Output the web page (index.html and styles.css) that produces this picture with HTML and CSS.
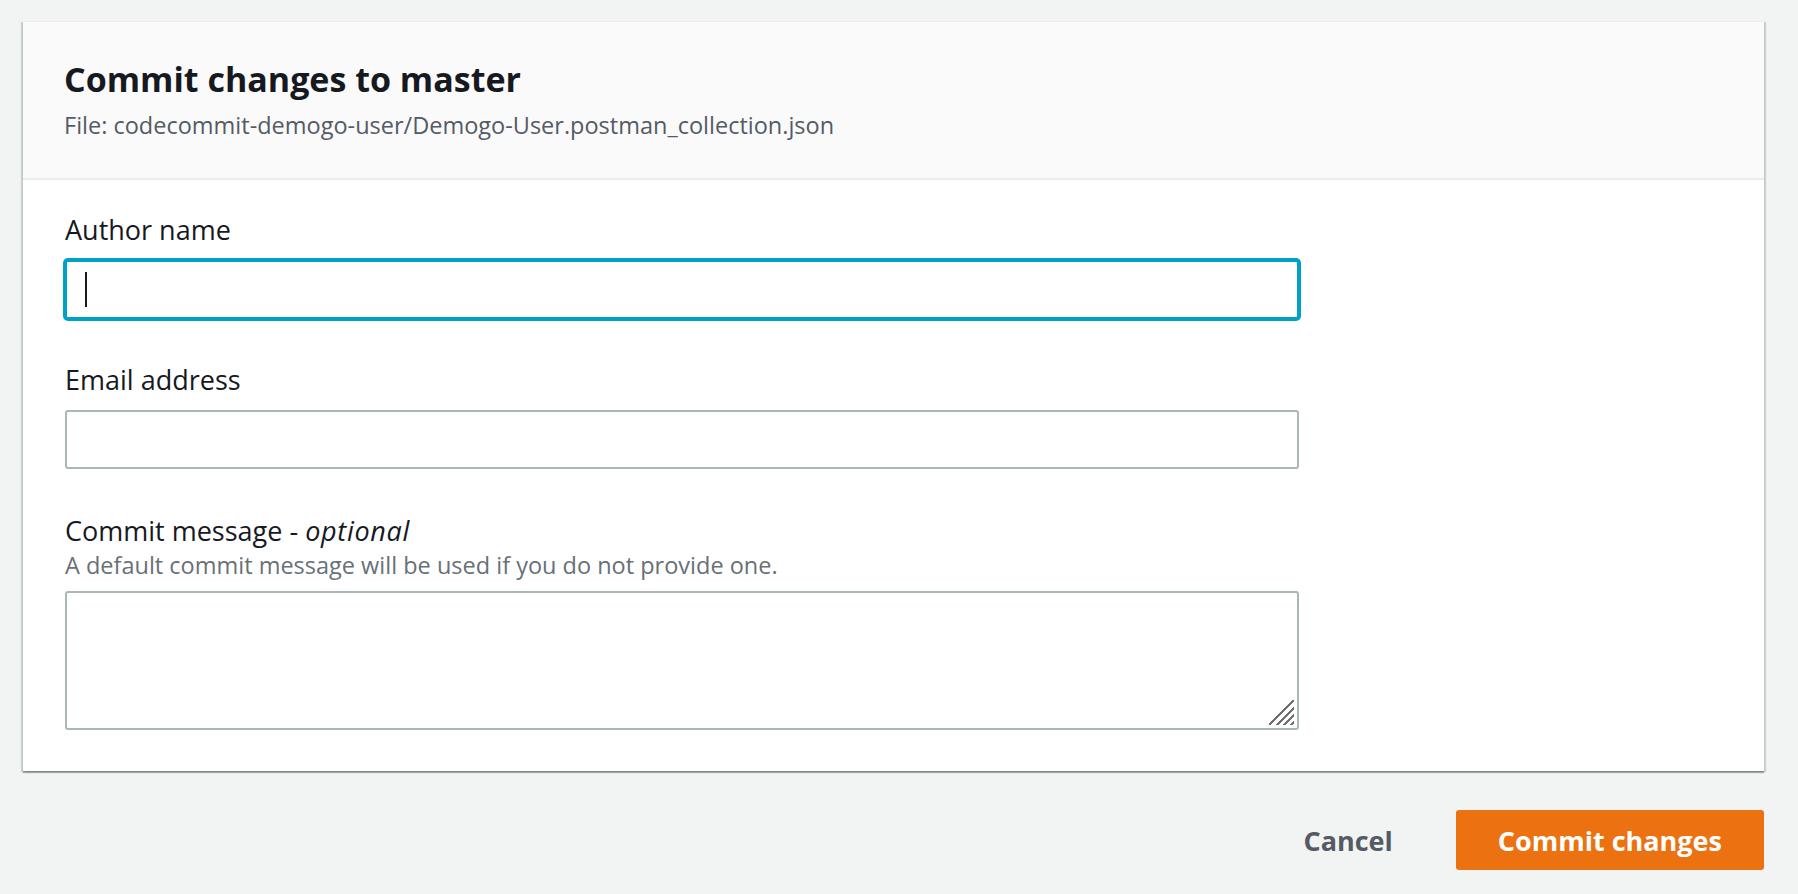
FILE: index.html
```html
<!DOCTYPE html>
<html lang="en">
<head>
<meta charset="utf-8">
<title>Commit changes to master</title>
<link rel="stylesheet" href="styles.css">
</head>
<body>
<main class="page">
  <section class="card">
    <header class="card-header">
      <h2 class="card-title">Commit changes to master</h2>
      <p class="card-subtitle">File: codecommit-demogo-user/Demogo-User.postman_collection.json</p>
    </header>
    <div class="card-body">
      <div class="field">
        <label class="field-label" for="author">Author name</label>
        <div class="input-wrap">
          <input id="author" class="text-input is-focused" type="text">
          <span class="caret"></span>
        </div>
      </div>
      <div class="field">
        <label class="field-label" for="email">Email address</label>
        <input id="email" class="text-input" type="email">
      </div>
      <div class="field field-message">
        <label class="field-label" for="message">Commit message - <em>optional</em></label>
        <p class="field-desc">A default commit message will be used if you do not provide one.</p>
        <div class="textarea-wrap">
          <textarea id="message" class="text-area"></textarea>
          <span class="grip"></span>
        </div>
      </div>
    </div>
  </section>
  <div class="actions">
    <button class="btn btn-link" type="button">Cancel</button>
    <button class="btn btn-primary" type="button">Commit changes</button>
  </div>
</main>
</body>
</html>
```

FILE: styles.css
```css
* { box-sizing: border-box; }

html, body {
  margin: 0;
  padding: 0;
  background: #f2f3f3;
  font-family: "Open Sans", "Noto Sans", "Liberation Sans", sans-serif;
  color: #16191f;
}

.page {
  padding: 21px 34px 0 23px;
}

.card {
  background: #ffffff;
  border-top: 1px solid #eaeded;
  box-shadow: 0 2px 1px 0 rgba(0, 28, 36, 0.3),
              2px 1px 1px 0 rgba(0, 28, 36, 0.15),
              -2px 1px 1px 0 rgba(0, 28, 36, 0.15);
}

.card-header {
  background: #fafafa;
  border-bottom: 2px solid #eaeded;
  padding: 35px 0 38px 41px;
}

.card-title {
  margin: 0;
  font-size: 34px;
  line-height: 44px;
  font-weight: 700;
  color: #16191f;
}

.card-subtitle {
  margin: 9px 0 0;
  font-size: 23.5px;
  line-height: 30px;
  color: #545b64;
}

.card-body {
  padding: 33px 0 41px 42px;
  display: flex;
  flex-direction: column;
  gap: 44px;
}

.field {
  display: flex;
  flex-direction: column;
  align-items: flex-start;
}

.field-message {
  margin-top: 1px;
}

.field-label {
  font-size: 27px;
  line-height: 34px;
  color: #16191f;
  margin-bottom: 13px;
}

.field-label em {
  font-style: italic;
  letter-spacing: 0.7px;
}

.field-desc {
  margin: -11px 0 11px;
  font-size: 23.5px;
  line-height: 30px;
  color: #687078;
}

.input-wrap,
.textarea-wrap {
  position: relative;
}

.text-input,
.text-area {
  display: block;
  width: 1234px;
  margin: 0;
  border: 2px solid #aab7b8;
  border-radius: 3px;
  background: #ffffff;
  font-family: inherit;
  font-size: 26px;
  padding: 0 18px;
  outline: none;
}

.text-input {
  height: 59px;
}

.text-input.is-focused {
  border-color: #00a1c9;
  box-shadow: 0 0 0 2px #00a1c9;
}

.caret {
  position: absolute;
  left: 20px;
  top: 12px;
  width: 2px;
  height: 35px;
  background: #16191f;
}

.text-area {
  height: 139px;
  padding: 10px 18px;
  resize: none;
}

.grip {
  position: absolute;
  right: 5px;
  bottom: 5px;
  width: 25px;
  height: 25px;
  pointer-events: none;
  background: linear-gradient(135deg,
    transparent 0 47%,
    #707070 47% 53%,
    transparent 53% 63%,
    #707070 63% 69%,
    transparent 69% 78%,
    #707070 78% 84%,
    transparent 84% 92%,
    #707070 92% 98%,
    transparent 98%);
}

.actions {
  display: flex;
  justify-content: flex-end;
  align-items: center;
  gap: 21px;
  margin-top: 39px;
}

.btn {
  height: 60px;
  border: none;
  border-radius: 3px;
  padding: 0 42px;
  font-family: inherit;
  font-size: 27px;
  font-weight: 700;
  cursor: pointer;
}

.btn-link {
  background: transparent;
  color: #545b64;
}

.btn-primary {
  background: #ec7211;
  color: #ffffff;
}
```
